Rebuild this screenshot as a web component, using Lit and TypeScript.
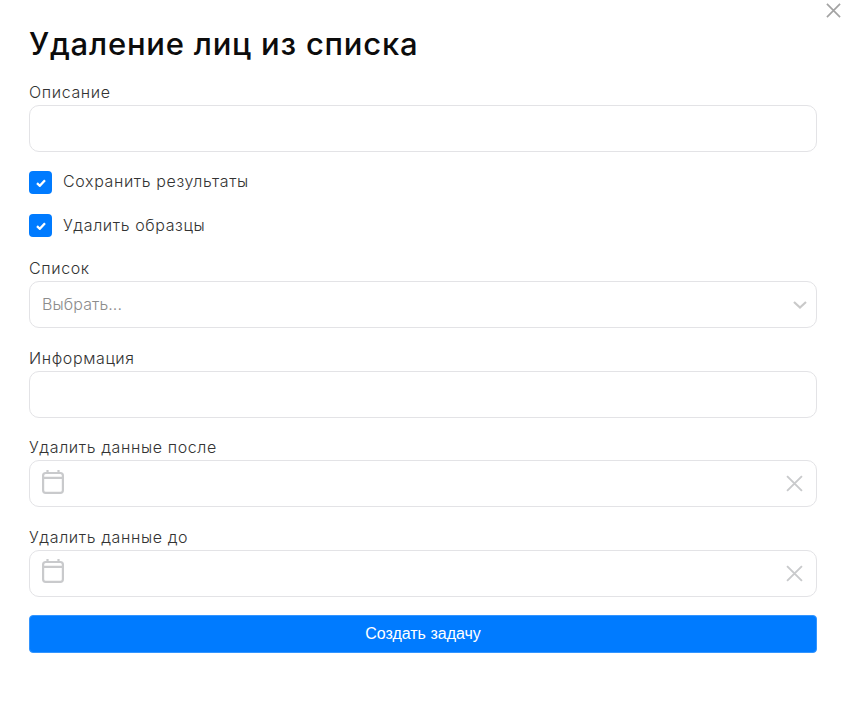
import { LitElement, html, css } from "lit";
import { customElement } from "lit/decorators.js";

const closeIcon = (cls: string) => html`<svg class=${cls} viewBox="0 0 16 16" fill="none" stroke="currentColor" stroke-width="1.8"><path d="M1 1L15 15M15 1L1 15"/></svg>`;
const calendar = html`<svg class="cal" viewBox="0 0 22 24" fill="none" stroke="currentColor" stroke-width="2.2"><rect x="1.1" y="3" width="19.8" height="19.9" rx="2.6"/><path d="M1 7.8H21M5.5 0V4M16.5 0V4"/></svg>`;
const check = html`<svg class="tick" viewBox="0 0 10 8" fill="none" stroke="#fff" stroke-width="2.3"><path d="M1 4.2L3.8 6.8L9 1.2"/></svg>`;

@customElement("app-root")
export class AppRoot extends LitElement {
  static styles = css`
    :host { display: block; width: 846px; height: 701px; background: #fff; position: relative; overflow: hidden;
      font-family: "Inter", "Noto Sans", sans-serif; color: #333; }
    .close { position: absolute; left: 826px; top: 3px; width: 15px; height: 15px; color: #a3a3a3; }
    form { display: flex; flex-direction: column; gap: 19.5px; padding: 26px 29px 0 29px; width: 788px; }
    h1 { margin: 0; font-size: 31px; line-height: 36px; font-weight: 500; color: #0c0c0c; letter-spacing: 0.78px; }
    .field { display: flex; flex-direction: column; gap: 3px; }
    label, .check span { font-size: 16px; line-height: 20px; color: #333; font-weight: 300; letter-spacing: 0.62px; }
    .box { box-sizing: border-box; height: 47px; border: 1px solid #e3e3e6; border-radius: 10px; background: #fff;
      display: flex; align-items: center; padding: 0 12px; position: relative; justify-content: space-between; }
    .placeholder { font-size: 16px; color: #8c8c8c; font-weight: 300; letter-spacing: 0.1px; margin-bottom: 2px; }
    .chev { width: 14px; height: 8px; color: #c9c9c9; margin-right: -3px; }
    .cal { width: 22px; height: 24px; color: #c9cacc; margin-top: -4px; }
    .clear { width: 17px; height: 17px; color: #c9cacc; margin-right: 1px; }
    .check { display: flex; align-items: flex-start; height: 24px; gap: 11px; }
    .check + .check .cb { margin-top: -0.5px; }
    .cb { width: 23px; height: 23px; border-radius: 4px; background: #007bff; display: flex; align-items: center; justify-content: center; }
    .tick { width: 10px; height: 8px; }
    button { height: 38.5px; margin-top: -1.5px; border: 1px solid #3395ff; border-radius: 4px; background: #007bff; color: #fff;
      font-family: "Liberation Sans", Arial, sans-serif; font-size: 16px; padding: 0; }
  `;

  field(label: string, inner: unknown = "") {
    return html`<div class="field"><label>${label}</label><div class="box">${inner}</div></div>`;
  }
  checkRow(label: string) {
    return html`<div class="check"><div class="cb">${check}</div><span>${label}</span></div>`;
  }
  render() {
    const dateInner = html`${calendar}${closeIcon("clear")}`;
    return html`
      ${closeIcon("close")}
      <form>
        <h1>Удаление лиц из списка</h1>
        ${this.field("Описание")}
        ${this.checkRow("Сохранить результаты")}
        ${this.checkRow("Удалить образцы")}
        ${this.field("Список", html`<span class="placeholder">Выбрать...</span><svg class="chev" viewBox="0 0 14 8" fill="none" stroke="currentColor" stroke-width="2.2"><path d="M1 1L7 6.5L13 1"/></svg>`)}
        ${this.field("Информация")}
        ${this.field("Удалить данные после", dateInner)}
        ${this.field("Удалить данные до", dateInner)}
        <button type="button">Создать задачу</button>
      </form>
    `;
  }
}
